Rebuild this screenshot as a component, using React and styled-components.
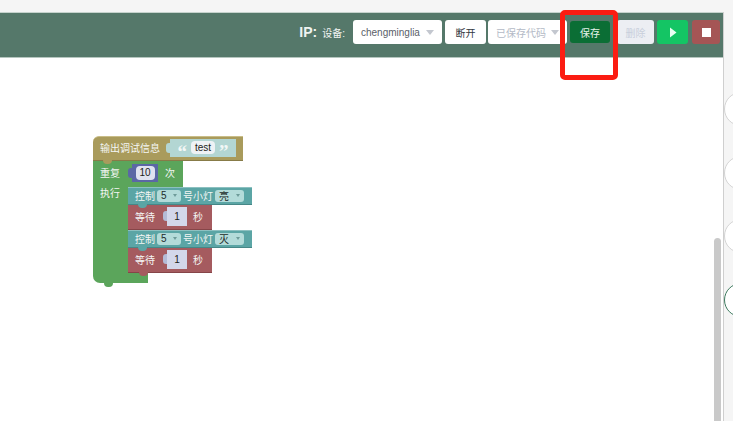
import React from 'react'
import styled, { createGlobalStyle } from 'styled-components'

const GlobalStyle = createGlobalStyle`
  html, body {
    margin: 0;
    padding: 0;
    background: #fff;
    overflow: hidden;
  }
  * {
    box-sizing: border-box;
  }
`

const Page = styled.div`
  width: 733px;
  height: 421px;
  display: flex;
  flex-direction: column;
  position: relative;
  overflow: hidden;
  font-family: "Liberation Sans", "Noto Sans CJK SC", sans-serif;
`

const TopStrip = styled.div`
  height: 12px;
  flex: none;
  background: #f5f5f5;
`

const Main = styled.div`
  flex: 1;
  display: flex;
  min-height: 0;
`

const Workspace = styled.div`
  flex: 1;
  display: flex;
  flex-direction: column;
  min-width: 0;
`

// Header bar
const Toolbar = styled.div`
  height: 46px;
  flex: none;
  display: flex;
  align-items: center;
  justify-content: flex-end;
  padding: 0 3px 6px 0;
  background: #55786a;
  border-top: 1px solid #c6d3cd;
  border-bottom: 1px solid #b5c6bf;
`

const IpLabel = styled.span`
  font-size: 14px;
  font-weight: bold;
  color: #eef3f0;
  margin-right: 5px;
`

const DeviceLabel = styled.span`
  font-size: 10px;
  color: #f2f5f3;
  margin-right: 8px;
`

const Select = styled.div`
  width: ${props => props.width}px;
  height: 24px;
  margin-right: ${props => props.gap}px;
  padding: 0 8px;
  display: flex;
  align-items: center;
  justify-content: space-between;
  background: #fff;
  border-radius: 3px;
  font-size: 10px;
  color: ${props => (props.muted ? '#b4bac6' : '#5a6068')};
  white-space: nowrap;
  overflow: hidden;
`

const Caret = styled.i`
  flex: none;
  width: 0;
  height: 0;
  border-left: 4px solid transparent;
  border-right: 4px solid transparent;
  border-top: 5px solid #c3c7cf;
`

const Button = styled.div`
  width: ${props => props.width}px;
  height: ${props => props.height || 24}px;
  margin-right: ${props => props.gap || 0}px;
  display: flex;
  align-items: center;
  justify-content: center;
  flex: none;
  border-radius: 3px;
  font-size: 10px;
  color: ${props => props.color};
  background: ${props => props.bg};
`

const Canvas = styled.div`
  flex: 1;
  position: relative;
  background: #fff;
  overflow: hidden;
`

// Blocks sit on a free canvas, so the stack is placed by coordinates
const BlockStack = styled.div`
  position: absolute;
  left: 93px;
  top: 78px;
  width: 170px;
  display: flex;
  flex-direction: column;
  align-items: flex-start;
`

const Block = styled.div`
  position: relative;
  width: ${props => props.width}px;
  height: ${props => props.height}px;
  display: flex;
  align-items: center;
  gap: ${props => props.gap || 4}px;
  padding: 0 0 ${props => props.lift || 0}px 7px;
  background: ${props => props.bg};
  color: #f4f6f4;
  font-size: 10px;
  white-space: nowrap;
  border-top: 1px solid ${props => props.edge || 'transparent'};
  border-bottom: 1px solid ${props => props.shade || 'transparent'};
  border-radius: ${props => props.radius || '0'};
`

const Notch = styled.i`
  position: absolute;
  left: ${props => props.left || 10}px;
  bottom: -4px;
  width: 9px;
  height: 4px;
  background: ${props => props.bg};
  border-radius: 0 0 5px 5px;
  z-index: 2;
`

const ValuePlug = styled.span`
  position: relative;
  height: ${props => props.height}px;
  width: ${props => props.width}px;
  margin-left: ${props => props.offset}px;
  display: flex;
  align-items: center;
  justify-content: center;
  gap: 4px;
  flex: none;
  background: ${props => props.bg};
  color: ${props => props.color};

  &::before {
    content: '';
    position: absolute;
    left: -4px;
    top: 4px;
    width: 4px;
    height: 10px;
    background: ${props => props.nub || props.bg};
    border-radius: 3px 0 0 3px;
  }
`

const Field = styled.span`
  height: ${props => props.height || 14}px;
  min-width: ${props => props.width}px;
  padding: 0 3px;
  display: inline-flex;
  align-items: center;
  justify-content: center;
  background: ${props => props.bg || '#eef2f5'};
  color: #1d2320;
  border-radius: 4px;
  font-size: 10px;
`

const Dropdown = styled.span`
  height: 12px;
  min-width: ${props => props.width}px;
  display: inline-flex;
  align-items: center;
  justify-content: space-between;
  padding: 0 4px 0 4px;
  background: #b3dbd9;
  color: #1d2b2a;
  border-radius: 3px;
  font-size: 10px;

  &::after {
    content: '';
    border-left: 2.5px solid transparent;
    border-right: 2.5px solid transparent;
    border-top: 3px solid #6e9b99;
  }
`

const Quote = styled.span`
  color: #f2f7f6;
  font-family: "Liberation Serif", serif;
  font-size: 19px;
  font-weight: bold;
  line-height: 19px;
  height: 11px;
`

const LoopBody = styled.div`
  display: flex;
`

const LoopArm = styled.div`
  width: 35px;
  background: #5ba55b;
  color: #f4f6f4;
  font-size: 10px;
  line-height: 14px;
`

const ArmLabel = styled.div`
  padding: 0 0 0 7px;
`

const LoopChildren = styled.div`
  display: flex;
  flex-direction: column;
  align-items: flex-start;
`

const LoopFoot = styled.div`
  position: relative;
  width: 55px;
  height: 10px;
  background: #5ba55b;
  border-radius: 0 0 0 7px;
`

// Right rail
const Rail = styled.div`
  width: 10px;
  flex: none;
  display: flex;
  flex-direction: column;
  gap: 29.5px;
  padding-top: 80px;
  background: #f5f5f5;
  border-left: 1px solid #cfcfcf;
`

const RailCircle = styled.div`
  flex: none;
  width: 34px;
  height: 34px;
  border-radius: 50%;
  background: #fff;
  border: 1px solid ${props => props.color};
`

const Scrollbar = styled.div`
  position: absolute;
  left: 714px;
  top: 238px;
  bottom: 0;
  width: 7px;
  background: #c9c9c9;
  border-radius: 4px 4px 0 0;
`

// Hand drawn marker over the screenshot
const Marker = styled.div`
  position: absolute;
  left: 560px;
  top: 10px;
  width: 58px;
  height: 70px;
  border: 5px solid #fb1c12;
  border-radius: 5px;
`

const PlayIcon = () => (
  <svg width="8" height="11" viewBox="0 0 8 11">
    <path d="M1 0.5 L7.5 5.5 L1 10.5 Z" fill="#eafff2" />
  </svg>
)

const StopIcon = () => (
  <svg width="9" height="9" viewBox="0 0 9 9">
    <rect width="9" height="9" fill="#fff" />
  </svg>
)

const TEAL = '#5ba5a5'
const RED = '#a55b5f'
const BLUE = '#5b67a5'
const GREEN = '#5ba55b'
const OLIVE = '#a99b5c'

const LampBlock = ({ state }) => (
  <Block width={124} height={18} lift={1} bg={TEAL} edge="#8cc0c0" shade="#468787" gap={2}>
    控制
    <Dropdown width={24}>5</Dropdown>
    <span>号小灯</span>
    <Dropdown width={29}>{state}</Dropdown>
    <Notch bg={TEAL} />
  </Block>
)

const WaitBlock = ({ last }) => (
  <Block width={84} height={25} lift={2} bg={RED} shade="#864548" gap={6}>
    等待
    <ValuePlug width={20} height={19} offset={6} bg="#d3d7ea" nub="#b4bbd6" color="#1d2320">
      1
    </ValuePlug>
    <span>秒</span>
    {last && <Notch bg={RED} left={11} />}
  </Block>
)

export default function App() {
  return (
    <>
      <GlobalStyle />
      <Page>
        <TopStrip />
        <Main>
          <Workspace>
            <Toolbar>
              <IpLabel>IP:</IpLabel>
              <DeviceLabel>设备:</DeviceLabel>
              <Select width={89} gap={3}>
                chengminglia
                <Caret />
              </Select>
              <Button width={41} gap={2} bg="#fff" color="#33383f">断开</Button>
              <Select width={79} gap={3} muted>
                已保存代码
                <Caret />
              </Select>
              <Button width={40} height={22} gap={7} bg="#0b6e35" color="#e6f3ea">保存</Button>
              <Button width={37} gap={3} bg="#eceef3" color="#c8cedb">删除</Button>
              <Button width={31} gap={4} bg="#14c564">
                <PlayIcon />
              </Button>
              <Button width={28} bg="#a55555">
                <StopIcon />
              </Button>
            </Toolbar>
            <Canvas>
              <BlockStack>
                <Block width={150} height={25} lift={2} bg={OLIVE} edge="#c9bd88" shade="#877b48" radius="6px 0 0 0" gap={5}>
                  输出调试信息
                  <ValuePlug width={66} height={18} offset={5} bg="#b3d6d3" color="#1d2320">
                    <Quote>“</Quote>
                    <Field width={24} height={13}>test</Field>
                    <Quote>”</Quote>
                  </ValuePlug>
                  <Notch bg={OLIVE} />
                </Block>
                <Block width={90} height={26} lift={3} bg={GREEN} gap={7}>
                  重复
                  <ValuePlug width={26} height={18} offset={5} bg={BLUE} color="#1d2320">
                    <Field width={19} height={14} bg="#dfe2f0">10</Field>
                  </ValuePlug>
                  <span>次</span>
                </Block>
                <LoopBody>
                  <LoopArm>
                    <ArmLabel>执行</ArmLabel>
                  </LoopArm>
                  <LoopChildren>
                    <LampBlock state="亮" />
                    <WaitBlock />
                    <LampBlock state="灭" />
                    <WaitBlock last />
                  </LoopChildren>
                </LoopBody>
                <LoopFoot>
                  <Notch bg={GREEN} left={11} />
                </LoopFoot>
              </BlockStack>
            </Canvas>
          </Workspace>
          <Rail>
            <RailCircle color="#d4d4d4" />
            <RailCircle color="#d4d4d4" />
            <RailCircle color="#d4d4d4" />
            <RailCircle color="#3d7a5e" />
          </Rail>
        </Main>
        <Scrollbar />
        <Marker />
      </Page>
    </>
  )
}
